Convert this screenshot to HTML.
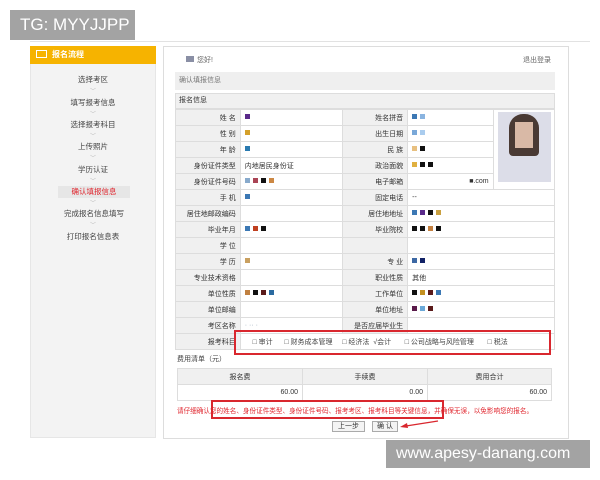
<!DOCTYPE html>
<html><head><meta charset="utf-8"><style>
*{margin:0;padding:0;box-sizing:border-box}
body{width:600px;height:480px;background:#fff;position:relative;overflow:hidden;font-family:"Liberation Sans","Noto Sans CJK SC",sans-serif;font-size:7px;color:#333}
.abs{position:absolute}
.wm{background:#a3a3a3;color:#fff;font-size:17px;line-height:30px;padding-left:10px}
.side{left:30px;top:46px;width:126px;height:392px;background:#f3f3f3;border:1px solid #e6e6e6}
.sh{left:30px;top:46px;width:126px;height:18px;background:#f6b300;color:#fff;font-weight:bold;font-size:8px;line-height:18px;padding-left:22px}
.si{left:58px;width:70px;text-align:center;font-size:7.5px;color:#444;height:12px;line-height:12px}
.chev{left:90px;color:#bbb;font-size:6px}
.main{left:163px;top:46px;width:406px;height:393px;border:1px solid #ddd;background:#fff}
table{border-collapse:collapse;position:absolute}
td{border:1px solid #ddd;height:16px;padding:0 4px;font-size:7px;white-space:nowrap}
td.l{background:#f0f0f0;text-align:right;width:65px}
.d{display:inline-block;width:5px;height:5px;margin-right:3px}
.red{border:2px solid #d9272e;position:absolute}
</style></head><body>
<div class="abs wm" style="left:10px;top:10px;width:125px;height:30px">TG: MYYJJPP</div>
<div class="abs" style="left:30px;top:41px;width:560px;height:1px;background:#e2e2e2"></div>

<div class="abs side"></div>
<div class="abs sh">报名流程</div>
<div class="abs" style="left:36px;top:50px;width:11px;height:8px;border:1px solid #fff"></div>
<div class="abs si" style="top:74px">选择考区</div><div class="abs chev" style="top:86px">﹀</div>
<div class="abs si" style="top:97px">填写报考信息</div><div class="abs chev" style="top:109px">﹀</div>
<div class="abs si" style="top:119px">选择报考科目</div><div class="abs chev" style="top:131px">﹀</div>
<div class="abs si" style="top:141px">上传照片</div><div class="abs chev" style="top:153px">﹀</div>
<div class="abs si" style="top:164px">学历认证</div><div class="abs chev" style="top:176px">﹀</div>
<div class="abs si" style="top:186px;left:58px;width:72px;background:#e6e6e6;color:#e0262e">确认填报信息</div><div class="abs chev" style="top:198px">﹀</div>
<div class="abs si" style="top:208px;left:52px;width:84px">完成报名信息填写</div><div class="abs chev" style="top:220px">﹀</div>
<div class="abs si" style="top:231px">打印报名信息表</div>

<div class="abs main"></div>
<div class="abs" style="left:186px;top:56px;width:8px;height:6px;background:#8a8fa5"></div>
<div class="abs" style="left:197px;top:55px;font-size:7px;color:#666">您好!</div>
<div class="abs" style="left:523px;top:55px;font-size:7px;color:#666">退出登录</div>
<div class="abs" style="left:175px;top:72px;width:380px;height:18px;background:#efefef;color:#777;line-height:18px;padding-left:4px">确认填报信息</div>
<div class="abs" style="left:175px;top:93px;width:380px;height:16px;background:#f0f0f0;border:1px solid #ddd;line-height:14px;padding-left:3px">报名信息</div>

<table style="left:175px;top:109px;width:380px">
<tr><td class="l">姓 名</td><td style="width:103px"><span class="d" style="background:#5a2a8a"></span></td><td class="l">姓名拼音</td><td style="width:86px"><span class="d" style="background:#3c78b4"></span><span class="d" style="background:#8ab4e0"></span></td><td rowspan="5" style="width:62px;padding:0;position:relative;background:#fff">
<div style="position:absolute;left:4px;top:2px;width:53px;height:70px;background:#dcdde8"></div>
<div style="position:absolute;left:15px;top:4px;width:30px;height:42px;background:#4a3a34;border-radius:14px 14px 4px 4px"></div>
<div style="position:absolute;left:21px;top:12px;width:18px;height:26px;background:#d9b9a6"></div>
</td></tr>
<tr><td class="l">性 别</td><td><span class="d" style="background:#d4a02a"></span></td><td class="l">出生日期</td><td><span class="d" style="background:#7aa8d8"></span><span class="d" style="background:#aaccee"></span></td></tr>
<tr><td class="l">年 龄</td><td><span class="d" style="background:#2a7ab0"></span></td><td class="l">民 族</td><td><span class="d" style="background:#e8c080"></span><span class="d" style="background:#111"></span></td></tr>
<tr><td class="l">身份证件类型</td><td>内地居民身份证</td><td class="l">政治面貌</td><td><span class="d" style="background:#e0b040"></span><span class="d" style="background:#111"></span><span class="d" style="background:#111"></span></td></tr>
<tr><td class="l">身份证件号码</td><td><span class="d" style="background:#8ac"></span><span class="d" style="background:#a45"></span><span class="d" style="background:#111"></span><span class="d" style="background:#c84"></span></td><td class="l">电子邮箱</td><td style="text-align:right">■.com</td></tr>
<tr><td class="l">手 机</td><td><span class="d" style="background:#3c78b4"></span></td><td class="l">固定电话</td><td colspan="2">--</td></tr>
<tr><td class="l">居住地邮政编码</td><td></td><td class="l">居住地地址</td><td colspan="2"><span class="d" style="background:#3c78b4"></span><span class="d" style="background:#5a2a8a"></span><span class="d" style="background:#111"></span><span class="d" style="background:#c9a040"></span></td></tr>
<tr><td class="l">毕业年月</td><td><span class="d" style="background:#3c78b4"></span><span class="d" style="background:#c04020"></span><span class="d" style="background:#111"></span></td><td class="l">毕业院校</td><td colspan="2"><span class="d" style="background:#111"></span><span class="d" style="background:#111"></span><span class="d" style="background:#c48040"></span><span class="d" style="background:#111"></span></td></tr>
<tr><td class="l">学 位</td><td></td><td class="l"></td><td colspan="2"></td></tr>
<tr><td class="l">学 历</td><td><span class="d" style="background:#c9a060"></span></td><td class="l">专 业</td><td colspan="2"><span class="d" style="background:#3c68a4"></span><span class="d" style="background:#112266"></span></td></tr>
<tr><td class="l">专业技术资格</td><td></td><td class="l">职业性质</td><td colspan="2">其他</td></tr>
<tr><td class="l">单位性质</td><td><span class="d" style="background:#c08040"></span><span class="d" style="background:#111"></span><span class="d" style="background:#5a1a1a"></span><span class="d" style="background:#2a6aa0"></span></td><td class="l">工作单位</td><td colspan="2"><span class="d" style="background:#111"></span><span class="d" style="background:#c49020"></span><span class="d" style="background:#5a1a1a"></span><span class="d" style="background:#3c78b4"></span></td></tr>
<tr><td class="l">单位邮编</td><td></td><td class="l">单位地址</td><td colspan="2"><span class="d" style="background:#5a1a4a"></span><span class="d" style="background:#6aa8d8"></span><span class="d" style="background:#5a1a1a"></span></td></tr>
<tr><td class="l">考区名称</td><td style="color:#9ab">· ·· ·</td><td class="l">是否应届毕业生</td><td colspan="2"></td></tr>
<tr><td class="l">报考科目</td><td colspan="4" style="color:#444;word-spacing:0">&nbsp;&nbsp;&nbsp;&nbsp;□ 审计 &nbsp;&nbsp;&nbsp;&nbsp;&nbsp;□ 财务成本管理 &nbsp;&nbsp;&nbsp;&nbsp;□ 经济法 &nbsp;√会计 &nbsp;&nbsp;&nbsp;&nbsp;&nbsp;&nbsp;□ 公司战略与风险管理 &nbsp;&nbsp;&nbsp;&nbsp;&nbsp;&nbsp;□ 税法</td></tr>
</table>
<div class="red" style="left:234px;top:330px;width:317px;height:25px"></div>
<div class="abs" style="left:177px;top:354px;color:#444">费用清单（元）</div>
<table style="left:177px;top:368px;width:375px">
<tr><td style="background:#f0f0f0;text-align:center;width:125px">报名费</td><td style="background:#f0f0f0;text-align:center;width:125px">手续费</td><td style="background:#f0f0f0;text-align:center">费用合计</td></tr>
<tr><td style="text-align:right">60.00</td><td style="text-align:right">0.00</td><td style="text-align:right">60.00</td></tr>
</table>
<div class="abs" style="left:177px;top:405px;color:#e0262e;font-size:6.6px;white-space:nowrap">请仔细确认您的姓名、身份证件类型、身份证件号码、报考考区、报考科目等关键信息，并确保无误，以免影响您的报名。</div>
<div class="red" style="left:211px;top:400px;width:233px;height:19px"></div>
<div class="abs" style="left:332px;top:421px;width:33px;height:11px;border:1px solid #aaa;background:#f4f4f4;text-align:center;line-height:9px">上一步</div>
<div class="abs" style="left:372px;top:421px;width:26px;height:11px;border:1px solid #aaa;background:#f4f4f4;text-align:center;line-height:9px">确 认</div>
<svg class="abs" style="left:398px;top:418px" width="42" height="12"><line x1="40" y1="3" x2="8" y2="8" stroke="#d9272e" stroke-width="1.3"/><polygon points="2,9 9,5 10,10" fill="#d9272e"/></svg>
<div class="abs wm" style="left:386px;top:440px;width:204px;height:28px;line-height:28px;font-size:16px">www.apesy-danang.com</div>
</body></html>
